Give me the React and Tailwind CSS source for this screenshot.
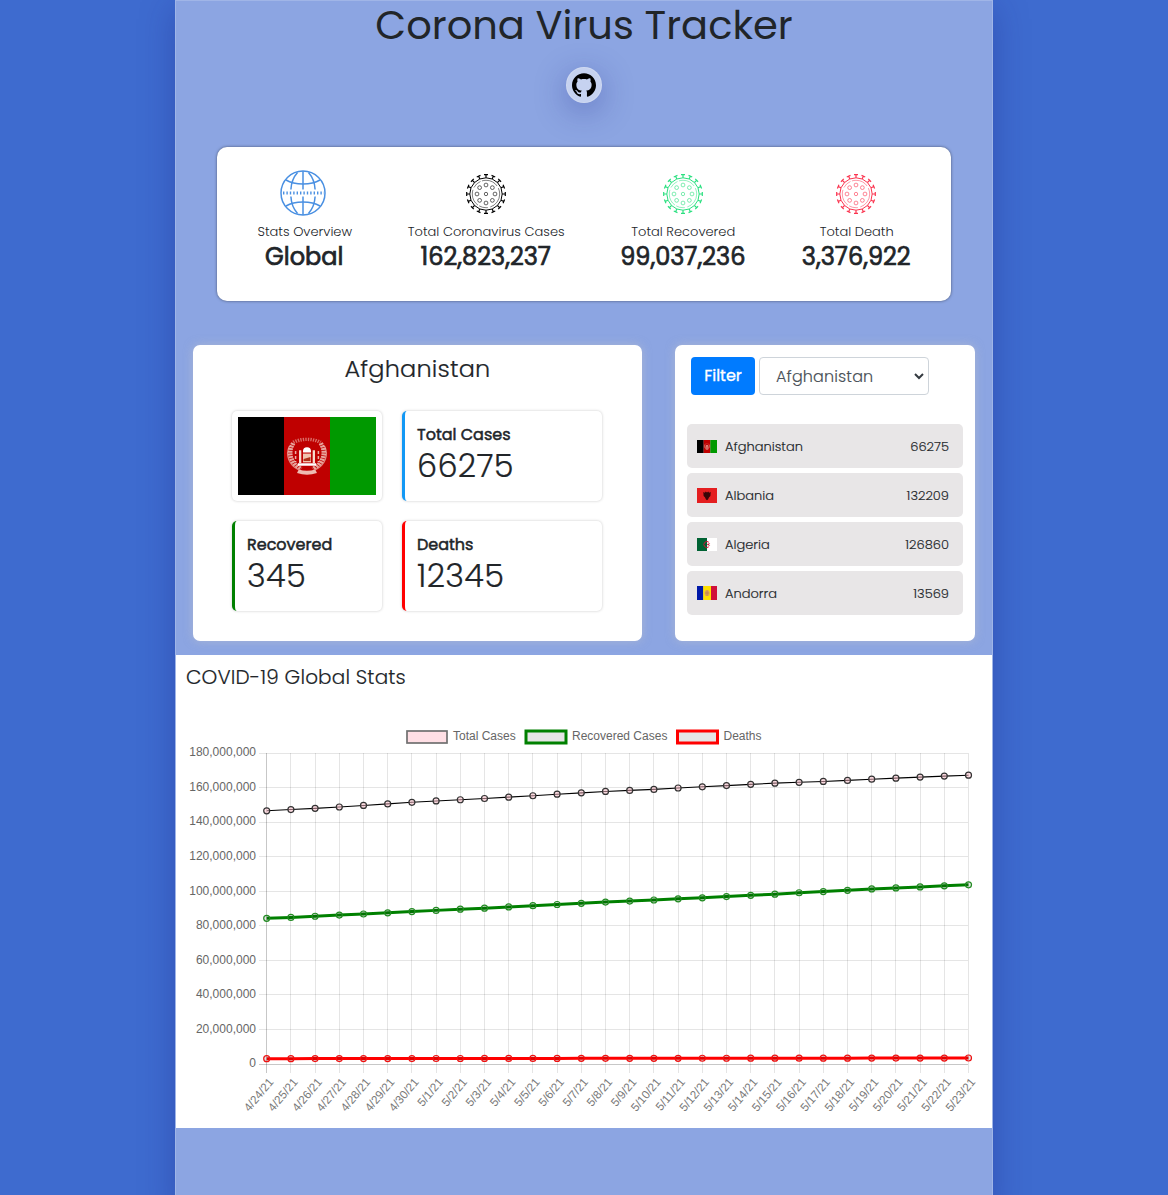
import React from "react";

function GlobeIcon() {
  return (
    <svg className="-ml-[3px] -mt-[2px]" width="46" height="46" viewBox="0 0 46 46" fill="none" stroke="#4a90e2" strokeWidth="1.5">
      <circle cx="23" cy="23" r="22" />
      <path d="M23 1v18.5M23 26.5V45" />
      <path d="M17.5 2.5C13.5 7 11.2 13 10.9 19.5M28.5 2.5c4 4.5 6.3 10.500 6.6 17M17.500 43.500C13.500 39 11.200 33 10.900 26.500M28.500 43.500c4-4.500 6.300-10.500 6.600-17" />
      <path d="M6 10c4.500 2.700 10.500 4 17 4s12.500-1.300 17-4M6 36c4.500-2.700 10.500-4 17-4s12.500 1.300 17 4" />
      <path d="M3 23h41" strokeWidth="3" strokeDasharray="1.4 2" />
    </svg>
  );
}

function VirusIcon({ color }) {
  const spikes = Array.from({ length: 16 }, (_, i) => i * 22.5);
  const spots = Array.from({ length: 8 }, (_, i) => (i * Math.PI) / 4);
  return (
    <svg width="40" height="40" viewBox="0 0 40 40" fill="none" stroke={color}>
      <circle cx="20" cy="20" r="16.200" strokeWidth="1" />
      <circle cx="20" cy="20" r="13.700" strokeWidth="0.5" strokeDasharray="17 2.500 9 1.500" />
      {spikes.map((a) => (
        <path key={a} transform={`rotate(${a} 20 20)`} d="M20 3.800V.8M18 .7h4" strokeWidth="1.200" />
      ))}
      <circle cx="20" cy="20" r="1.700" strokeWidth="0.600" />
      {spots.map((a) => (
        <circle key={a} cx={20 + 9 * Math.cos(a)} cy={20 + 9 * Math.sin(a)} r="1.900" strokeWidth="0.600" />
      ))}
    </svg>
  );
}

function GithubMark() {
  return (
    <svg width="24" height="24" viewBox="0 0 24 24" fill="#000">
      <path d="M12 .297c-6.63 0-12 5.373-12 12 0 5.303 3.438 9.8 8.205 11.385.6.113.82-.258.82-.577 0-.285-.01-1.04-.015-2.04-3.338.724-4.042-1.61-4.042-1.61C4.422 18.07 3.633 17.7 3.633 17.7c-1.087-.744.084-.729.084-.729 1.205.084 1.838 1.236 1.838 1.236 1.07 1.835 2.809 1.305 3.495.998.108-.776.417-1.305.76-1.605-2.665-.3-5.466-1.332-5.466-5.93 0-1.31.465-2.38 1.235-3.22-.135-.303-.54-1.523.105-3.176 0 0 1.005-.322 3.3 1.23.96-.267 1.98-.399 3-.405 1.02.006 2.04.138 3 .405 2.28-1.552 3.285-1.23 3.285-1.23.645 1.653.24 2.873.12 3.176.765.84 1.23 1.91 1.23 3.22 0 4.61-2.805 5.625-5.475 5.92.42.36.81 1.096.81 2.22 0 1.606-.015 2.896-.015 3.286 0 .315.21.69.825.57C20.565 22.092 24 17.592 24 12.297c0-6.627-5.373-12-12-12" />
    </svg>
  );
}

function AfghanistanFlag({ width, height }) {
  return (
    <svg width={width} height={height} viewBox="0 0 138 78" preserveAspectRatio="none">
      <rect width="46.500" height="78" fill="#000" />
      <rect x="46" width="46.500" height="78" fill="#bf0000" />
      <rect x="92" width="46" height="78" fill="#009900" />
      <g transform="translate(69 40) scale(1.14 .98) translate(-69 -40)">
        <g fill="none" stroke="#f6dcd0">
          <path d="M57 26a18.500 18.500 0 0 0 7 26M81 26a18.500 18.500 0 0 1-7 26" strokeWidth="4" strokeDasharray="2 .7" opacity=".75" />
          <path d="M53.500 29a19 19 0 0 0 8 24M84.500 29a19 19 0 0 1-8 24" strokeWidth="1" opacity=".6" />
          <path d="M57 25c7-4 17-4 24 0" strokeWidth="3.500" strokeDasharray="1.200 1" opacity=".5" />
          <path d="M63 33v13M75 33v13" strokeWidth="2" />
          <path d="M59 34v11M79 34v11" strokeWidth="1.300" strokeDasharray="3 2" opacity=".8" />
          <path d="M61 54.500c5 2 11 2 16 0" strokeWidth="4" opacity=".85" />
        </g>
        <path d="M65.500 34a3.500 4 0 0 1 7 0v1.500h-7zM61 46.500h16V49H61z" fill="#fff" />
        <path d="M65.500 36.500h7v9h-7z" fill="#f0c4b0" />
        <path d="M66 42l6-2v4h-6z" fill="#b03018" />
      </g>
    </svg>
  );
}

function AlbaniaFlag() {
  return (
    <svg width="20" height="15" viewBox="0 0 20 15">
      <rect width="20" height="15" fill="#e41e20" />
      <path d="M6.300 4l1.600.7.8-1.300L10 4.600l1.300-1.200.8 1.300 1.600-.7-.3 4-1.300 1.200L11 11.500l-1 .8-1-.8-1.100-2.300L6.600 8z" fill="#3a0607" />
    </svg>
  );
}

function AlgeriaFlag() {
  return (
    <svg width="20" height="13" viewBox="0 0 20 13">
      <rect width="20" height="13" fill="#fff" />
      <rect width="10" height="13" fill="#006233" />
      <path d="M11.800 4.200a3 3 0 1 0 0 4.600" fill="none" stroke="#d21034" strokeWidth="1" />
      <path d="M10 6.500l2.600-1-.9 1 .9 1z" fill="#d21034" stroke="#d21034" strokeWidth=".5" />
    </svg>
  );
}

function AndorraFlag() {
  return (
    <svg width="20" height="14" viewBox="0 0 20 14">
      <rect width="6.500" height="14" fill="#0018a8" />
      <rect x="6.200" width="8" height="14" fill="#fedf00" />
      <rect x="14" width="6" height="14" fill="#d0103a" />
      <rect x="7.800" y="4.300" width="4.600" height="5.600" rx="1.500" fill="#d9a25c" />
      <path d="M10.100 4.300v5.600M7.800 7h4.600" stroke="#c07a3c" strokeWidth=".6" />
    </svg>
  );
}

const summary = [
  { label: "Stats Overview", value: "Global", width: "w-[94px]", icon: <GlobeIcon /> },
  { label: "Total Coronavirus Cases", value: "162,823,237", width: "w-[156px]", icon: <VirusIcon color="#000" /> },
  { label: "Total Recovered", value: "99,037,236", width: "w-[125px]", icon: <VirusIcon color="#2be080" /> },
  { label: "Total Death", value: "3,376,922", width: "w-[109px]", icon: <VirusIcon color="#fb3550" /> },
];

const countries = [
  { name: "Afghanistan", cases: "66275", flag: <AfghanistanFlag width={20} height={13} /> },
  { name: "Albania", cases: "132209", flag: <AlbaniaFlag /> },
  { name: "Algeria", cases: "126860", flag: <AlgeriaFlag /> },
  { name: "Andorra", cases: "13569", flag: <AndorraFlag /> },
];

function StatBox({ label, value, border }) {
  return (
    <div className={`h-[90px] rounded-[5px] border-l-[3px] bg-white pl-3 pt-3 shadow-[0_0_3px_rgba(0,0,0,0.22)] ${border}`}>
      <div className="text-[16px] leading-6 [-webkit-text-stroke:0.5px]">{label}</div>
      <div className="text-[32px] font-light leading-[38px] tracking-[0.3px] [-webkit-text-stroke:0.2px]">{value}</div>
    </div>
  );
}

const days = [
  "4/24/21", "4/25/21", "4/26/21", "4/27/21", "4/28/21", "4/29/21", "4/30/21", "5/1/21", "5/2/21", "5/3/21",
  "5/4/21", "5/5/21", "5/6/21", "5/7/21", "5/8/21", "5/9/21", "5/10/21", "5/11/21", "5/12/21", "5/13/21",
  "5/14/21", "5/15/21", "5/16/21", "5/17/21", "5/18/21", "5/19/21", "5/20/21", "5/21/21", "5/22/21", "5/23/21",
];
const totalCases = [146.7, 147.4, 148.1, 148.9, 149.8, 150.7, 151.6, 152.4, 153.1, 153.8, 154.6, 155.4, 156.3, 157.1, 157.9, 158.5, 159.1, 159.9, 160.6, 161.3, 162.0, 162.7, 163.2, 163.7, 164.3, 165.0, 165.6, 166.2, 166.8, 167.3];
const recoveredCases = [84.4, 84.9, 85.6, 86.3, 86.9, 87.6, 88.3, 89.0, 89.7, 90.3, 91.0, 91.7, 92.4, 93.1, 93.8, 94.4, 95.0, 95.7, 96.3, 97.0, 97.7, 98.4, 99.2, 99.9, 100.6, 101.4, 102.0, 102.6, 103.2, 103.8];
const deaths = days.map((_, i) => 3.09 + i * 0.013);

const px = (i) => 266.7 + i * 24.2;
const py = (v) => 1064 - (v * 310.7) / 180;
const snap = (n) => Math.floor(n) + 0.5;

function Series({ data, color, width, fill, dot }) {
  return (
    <g>
      <polyline points={data.map((v, i) => `${px(i)},${py(v)}`).join(" ")} fill="none" stroke={color} strokeWidth={width} />
      {data.map((v, i) => (
        <circle key={i} cx={px(i)} cy={py(v)} r="3" fill={fill} stroke={dot} strokeWidth="1.2" />
      ))}
    </g>
  );
}

function Chart() {
  const ticks = [0, 20, 40, 60, 80, 100, 120, 140, 160, 180];
  return (
    <svg className="mt-[11px] block [font-family:'Liberation_Sans',Arial,sans-serif]" width="816" height="428" viewBox="176 700 816 428" fontSize="12" fill="#666">
      <rect x="407" y="731" width="40" height="12" fill="#ffdfe5" stroke="#707070" strokeWidth="1.700" />
      <text x="453" y="740">Total Cases</text>
      <rect x="526" y="731" width="40" height="12" fill="#e5e5e5" stroke="#008000" strokeWidth="3" />
      <text x="572" y="740">Recovered Cases</text>
      <rect x="677.500" y="731" width="40" height="12" fill="#e5e5e5" stroke="#ff0000" strokeWidth="3" />
      <text x="723.500" y="740">Deaths</text>
      {days.map((d, i) => (
        <g key={d}>
          <path d={`M${snap(px(i))} 753V1073`} stroke={i === 0 ? "rgba(0,0,0,.22)" : "rgba(0,0,0,.1)"} />
          <text transform={`translate(${px(i) + 7.5} 1082.3) rotate(-50)`} textAnchor="end" fontSize="11.7" opacity=".88">{d}</text>
        </g>
      ))}
      {ticks.map((t) => (
        <g key={t}>
          <path d={`M259 ${snap(py(t))}H968`} stroke={t === 0 ? "rgba(0,0,0,.22)" : "rgba(0,0,0,.1)"} />
          <text x="256" y={Math.round(py(t) + 0.13) + 3} textAnchor="end">{t === 0 ? "0" : `${t},000,000`}</text>
        </g>
      ))}
      <Series data={deaths} color="#ff0000" width={3} fill="rgba(0,0,0,.1)" dot="#ee1111" />
      <Series data={recoveredCases} color="#008000" width={3} fill="rgba(0,0,0,.1)" dot="#228b22" />
      <Series data={totalCases} color="#000" width={1.1} fill="rgba(255,192,203,.5)" dot="#333" />
    </svg>
  );
}

export default function App() {
  return (
    <div className="flex h-[1195px] justify-center overflow-hidden bg-[#3e6bcf] font-normal text-[#212529] [font-family:Poppins,Inter,sans-serif]">
      <main className="h-[1210px] w-[818px] shrink-0 border border-[#a0b5e7] bg-[#8ca5e2] shadow-[0_8px_32px_0_rgba(31,38,135,0.37)]">
        <h1 className="text-center text-[40px] leading-[48px]">Corona Virus Tracker</h1>
        <div className="mt-[18px] flex justify-center">
          <a className="flex size-9 items-center justify-center rounded-full border border-white/[0.18] bg-[#c6d2f0] shadow-[0_8px_32px_0_rgba(31,38,135,0.37)]">
            <GithubMark />
          </a>
        </div>

        <section className="mx-auto mt-[44px] flex h-[154px] w-[734px] justify-around rounded-[10px] bg-white px-3 pt-[23px] shadow-[0_0_3px_rgba(0,0,0,0.5)]">
          {summary.map((s) => (
            <div key={s.label} className={`flex flex-col items-center whitespace-nowrap ${s.width}`}>
              <div className="flex h-[46px] items-center pt-px">{s.icon}</div>
              <div className="mt-[6px] pl-px text-[13px] font-light leading-5">{s.label}</div>
              <div className="text-[24px] leading-[30px] [-webkit-text-stroke:0.7px]">{s.value}</div>
            </div>
          ))}
        </section>

        <div className="mt-[44px] flex gap-[33px] pl-[17px]">
          <section className="h-[296px] w-[449px] rounded-[7px] bg-white pl-[39px] pt-[9px] shadow-[0_0_10px_rgba(200,200,200,0.5)]">
            <h2 className="mr-[39px] text-center text-[24px] font-light leading-[30px] tracking-[0.18px] [-webkit-text-stroke:0.2px]">Afghanistan</h2>
            <div className="mt-[27px] grid grid-cols-[150px_200px] gap-5">
              <div className="h-[90px] rounded-[5px] bg-white p-[6px] shadow-[0_0_3px_rgba(0,0,0,0.22)]">
                <AfghanistanFlag width={138} height={78} />
              </div>
              <StatBox label="Total Cases" value="66275" border="border-[#1298f5]" />
              <StatBox label="Recovered" value="345" border="border-[#008000]" />
              <StatBox label="Deaths" value="12345" border="border-[#ff0000]" />
            </div>
          </section>

          <section className="h-[296px] w-[300px] rounded-[7px] bg-white px-3 pt-3 shadow-[0_0_10px_rgba(200,200,200,0.5)]">
            <div className="flex gap-1 pl-1">
              <button className="h-[38px] w-[64px] rounded-[4px] bg-[#007bff] text-[16px] text-white [-webkit-text-stroke:0.3px]">Filter</button>
              <div className="flex h-[38px] w-[170px] items-center justify-between rounded-[4px] border border-[#ced4da] pl-4 pr-1 text-[16px] font-light tracking-[0.13px] text-[#495057] [-webkit-text-stroke:0.15px]">
                <span className="pt-[2px]">Afghanistan</span>
                <svg width="10" height="7" viewBox="0 0 10 7" fill="none" stroke="#343a40" strokeWidth="2">
                  <path d="M1 1l4 4 4-4" />
                </svg>
              </div>
            </div>
            <ul className="mt-[29px] flex flex-col gap-[5px]">
              {countries.map((c) => (
                <li key={c.name} className="flex h-11 items-center rounded-[5px] bg-[#e8e6e7] pl-[10px] pr-[14px] text-[13px] font-light leading-5 [-webkit-text-stroke:0.15px]">
                  {c.flag}
                  <span className="ml-2 flex-1 pt-[2px]">{c.name}</span>
                  <span className="pt-[2px]">{c.cases}</span>
                </li>
              ))}
            </ul>
          </section>
        </div>

        <section className="mt-[14px] h-[473px] bg-white pt-[10px]">
          <h3 className="pl-[10px] text-[20px] font-light leading-6 tracking-[0.15px] [-webkit-text-stroke:0.15px]">COVID-19 Global Stats</h3>
          <Chart />
        </section>
      </main>
    </div>
  );
}
